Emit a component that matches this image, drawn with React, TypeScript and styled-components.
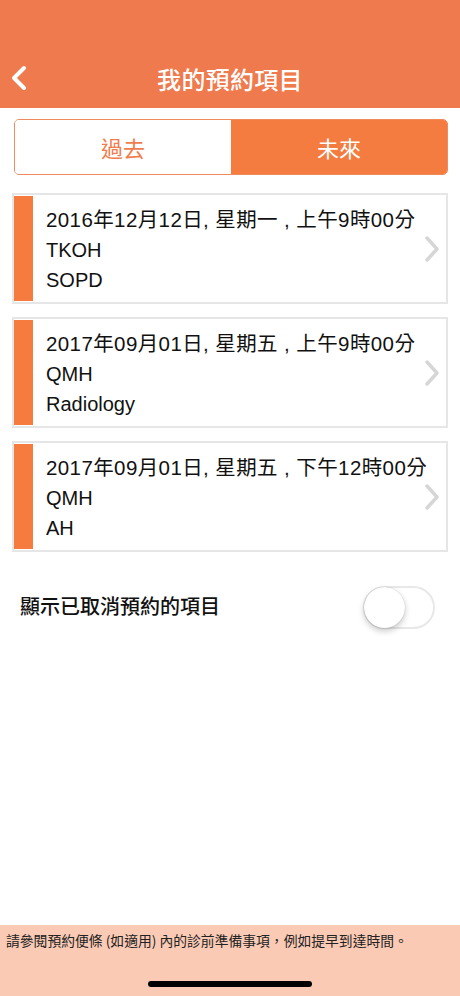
import React from "react";
import styled, { createGlobalStyle } from "styled-components";

const Global = createGlobalStyle`
  html, body { margin: 0; padding: 0; background: #fff; }
  body { font-family: "Liberation Sans", "Noto Sans CJK TC", sans-serif; }
  * { box-sizing: border-box; }
`;

const Page = styled.div`
  width: 460px;
  height: 996px;
  display: flex;
  flex-direction: column;
  background: #fff;
  position: relative;
  overflow: hidden;
`;

const Header = styled.header`
  height: 108px;
  background: #ef7a4e;
  display: flex;
  align-items: flex-end;
  position: relative;
`;

const HeaderBar = styled.div`
  height: 56px;
  width: 100%;
  display: flex;
  align-items: center;
  justify-content: center;
  position: relative;
`;

const BackButton = styled.div`
  position: absolute;
  left: 8px;
  top: 12px;
  width: 22px;
  height: 28px;
  display: flex;
  align-items: center;
  justify-content: center;
`;

const Title = styled.h1`
  margin: 0;
  font-family: "Noto Sans CJK TC", sans-serif;
  font-weight: 500;
  font-size: 24px;
  color: #fff;
  letter-spacing: 0.3px;
  transform: translateY(-2px);
`;

const Segment = styled.div`
  margin: 11px 12px 0 14px;
  height: 56px;
  display: flex;
  border: 1px solid #f0895c;
  border-radius: 5px;
  overflow: hidden;
`;

const SegButton = styled.div<{ $active?: boolean }>`
  flex: 1;
  display: flex;
  align-items: center;
  justify-content: center;
  font-family: "Noto Sans CJK TC", sans-serif;
  font-size: 22px;
  color: ${(p) => (p.$active ? "#fff" : "#f07c4d")};
  background: ${(p) => (p.$active ? "#f57c40" : "#fff")};
`;

const List = styled.div`
  margin: 18px 12px 0 12px;
  display: flex;
  flex-direction: column;
  gap: 13px;
`;

const Card = styled.div`
  height: 111px;
  border: 2px solid #e6e6e6;
  display: flex;
  align-items: stretch;
  background: #fff;
  position: relative;
`;

const Stripe = styled.div`
  width: 19px;
  background: #f57c3e;
  margin: 1px 0;
`;

const CardBody = styled.div`
  flex: 1;
  padding: 10px 0 0 13px;
  display: flex;
  flex-direction: column;
`;

const Line = styled.div`
  font-family: "Liberation Sans", "Noto Sans CJK TC", sans-serif;
  font-size: 20px;
  line-height: 30px;
  color: #111;
  white-space: nowrap;
`;

const DateLine = styled(Line)`
  font-size: 20.5px;
  letter-spacing: 0.4px;
`;

const Chevron = styled.div`
  position: absolute;
  right: 4px;
  top: 50%;
  transform: translateY(-50%);
  display: flex;
`;

const ToggleRow = styled.div`
  margin: 34px 0 0 0;
  padding: 0 25px 0 20px;
  display: flex;
  align-items: center;
  justify-content: space-between;
  height: 43px;
`;

const ToggleLabel = styled.div`
  font-family: "Noto Sans CJK TC", sans-serif;
  font-size: 20px;
  font-weight: 500;
  color: #111;
  transform: translateY(-2px);
`;

const Switch = styled.div`
  width: 72px;
  height: 43px;
  border-radius: 22px;
  border: 2px solid #e8e8e8;
  background: #fff;
  position: relative;
`;

const Knob = styled.div`
  position: absolute;
  left: -1px;
  top: -1px;
  width: 41px;
  height: 41px;
  border-radius: 50%;
  background: #fff;
  box-shadow: 0 3px 6px rgba(0, 0, 0, 0.22), 0 0 1px rgba(0, 0, 0, 0.25);
`;

const Spacer = styled.div`
  flex: 1;
`;

const Footer = styled.footer`
  height: 71px;
  background: #fbcab5;
  padding: 5px 0 0 6px;
  position: relative;
`;

const Notice = styled.div`
  font-family: "Noto Sans CJK TC", sans-serif;
  font-size: 13.8px;
  color: #222;
  white-space: nowrap;
`;

const HomeIndicator = styled.div`
  position: absolute;
  left: 148px;
  bottom: 9px;
  width: 164px;
  height: 6px;
  border-radius: 3px;
  background: #000;
`;

const appointments = [
  { date: "2016年12月12日, 星期一 , 上午9時00分", hosp: "TKOH", dept: "SOPD" },
  { date: "2017年09月01日, 星期五 , 上午9時00分", hosp: "QMH", dept: "Radiology" },
  { date: "2017年09月01日, 星期五 , 下午12時00分", hosp: "QMH", dept: "AH" },
];

export default function App() {
  return (
    <Page>
      <Global />
      <Header>
        <HeaderBar>
          <BackButton>
            <svg width="18" height="26" viewBox="0 0 18 26">
              <path d="M14 3 L4 13 L14 23" fill="none" stroke="#fff" strokeWidth="4" strokeLinecap="round" strokeLinejoin="round" />
            </svg>
          </BackButton>
          <Title>我的預約項目</Title>
        </HeaderBar>
      </Header>
      <Segment>
        <SegButton>過去</SegButton>
        <SegButton $active>未來</SegButton>
      </Segment>
      <List>
        {appointments.map((a, i) => (
          <Card key={i}>
            <Stripe />
            <CardBody>
              <DateLine>{a.date}</DateLine>
              <Line>{a.hosp}</Line>
              <Line>{a.dept}</Line>
            </CardBody>
            <Chevron>
              <svg width="20" height="30" viewBox="0 0 20 30">
                <path d="M5 4 L15 15 L5 26" fill="none" stroke="#d6d6d6" strokeWidth="3.5" strokeLinecap="round" strokeLinejoin="round" />
              </svg>
            </Chevron>
          </Card>
        ))}
      </List>
      <ToggleRow>
        <ToggleLabel>顯示已取消預約的項目</ToggleLabel>
        <Switch>
          <Knob />
        </Switch>
      </ToggleRow>
      <Spacer />
      <Footer>
        <Notice>請參閱預約便條 (如適用) 內的診前準備事項，例如提早到達時間。</Notice>
        <HomeIndicator />
      </Footer>
    </Page>
  );
}
